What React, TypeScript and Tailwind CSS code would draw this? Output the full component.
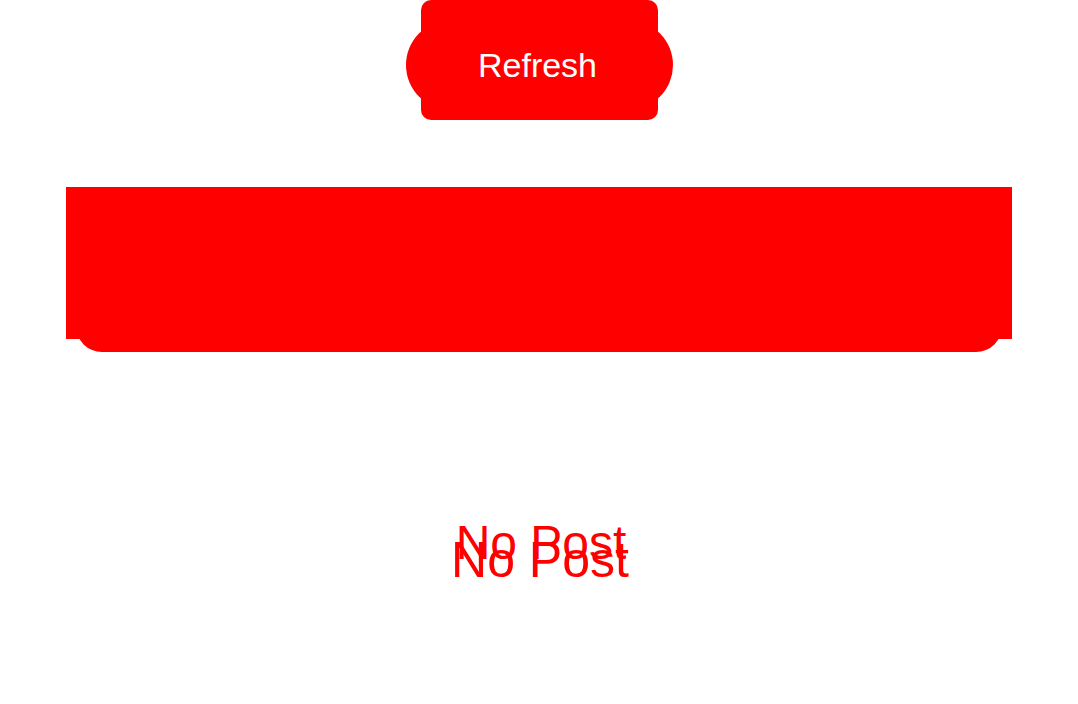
export default function App() {
  return (
    <div className="min-h-[704px] w-full bg-white font-['Liberation_Sans',Arial,sans-serif]">
      {/* refresh button */}
      <div className="flex justify-center pl-[1px]">
        <div className="relative h-[120px] w-[237px]">
          <div className="absolute -left-[15px] -right-[15px] top-[20px] h-[90px] rounded-full bg-[#ff0000]" />
          <div className="absolute inset-0 rounded-[10px] bg-[#ff0000]" />
          <button className="relative flex h-full w-full items-center justify-center pr-[4px] pt-[10px] text-[34px] leading-none text-white">
            Refresh
          </button>
        </div>
      </div>

      {/* banner block */}
      <div className="relative mx-[76px] mt-[67px] h-[165px] rounded-b-[26px] bg-[#ff0000]">
        <div className="absolute -left-[10px] -right-[10px] top-0 h-[152px] bg-[#ff0000]" />
      </div>

      {/* empty state */}
      <div className="mt-[167px] flex flex-col items-center text-[#ff0000]">
        <div className="h-[48px] pl-[4px] text-[48px] leading-none">No Post</div>
        <div className="-mt-[32px] h-[50px] pl-[2px] text-[50px] leading-none">No Post</div>
      </div>
    </div>
  );
}
